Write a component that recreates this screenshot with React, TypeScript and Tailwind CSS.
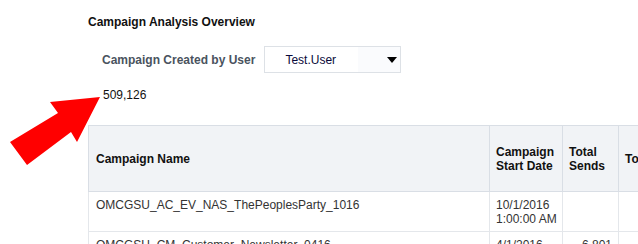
const rows = [
  { name: "OMCGSU_AC_EV_NAS_ThePeoplesParty_1016", date: ["10/1/2016", "1:00:00 AM"], sends: "" },
  { name: "OMCGSU_CM_Customer_Newsletter_0416", date: ["4/1/2016", "1:00:00 AM"], sends: "6,801" },
];

export default function App() {
  return (
    <div className="relative w-[638px] h-[244px] overflow-hidden bg-white font-['Liberation_Sans',Arial,sans-serif] text-[12px] leading-[14px]">
      {/* title */}
      <div className="ml-[88px] pt-[15px] font-bold text-[#111]">Campaign Analysis Overview</div>

      {/* filter */}
      <div className="flex items-center gap-[9px] ml-[102px] mt-[17px]">
        <span className="font-bold text-[#4a535e]">Campaign Created by User</span>
        <div className="flex h-[27px] w-[137px] border border-[#dde1e6]">
          <div className="flex flex-1 items-center pl-[20px] text-[#0a0a3a] bg-white">Test.User</div>
          <div className="flex w-[42px] items-center justify-end pr-[2px] bg-[#fafbfd]">
            <svg width="10" height="6" viewBox="0 0 10 6" className="mr-[1px]">
              <polygon points="0,0 10,0 5,6" fill="#000" />
            </svg>
          </div>
        </div>
      </div>

      {/* total */}
      <div className="ml-[103px] mt-[15px] text-[#111]">509,126</div>

      {/* table */}
      <table className="ml-[88px] mt-[23px] table-fixed border-collapse w-[640px]">
        <colgroup>
          <col className="w-[401px]" />
          <col className="w-[73px]" />
          <col className="w-[56px]" />
          <col className="w-[110px]" />
        </colgroup>
        <thead>
          <tr className="bg-[#f1f3f6]">
            {["Campaign Name", "Campaign Start Date", "Total Sends", "Total Deliveries"].map((h) => (
              <th
                key={h}
                className="h-[66px] border border-[#d9dee5] pl-[6px] pr-[2px] first:pl-[7px] text-left align-middle font-bold text-[#111]"
              >
                {h}
              </th>
            ))}
          </tr>
        </thead>
        <tbody>
          {rows.map((r) => (
            <tr key={r.name}>
              <td className="h-[40px] border border-[#e4e7eb] pl-[7px] pt-[6px] align-top text-[#333] whitespace-nowrap">
                {r.name}
              </td>
              <td className="border border-[#e4e7eb] pl-[6px] pr-[2px] pt-[6px] align-top text-[#333] whitespace-nowrap">
                {r.date[0]}
                <br />
                {r.date[1]}
              </td>
              <td className="border border-[#e4e7eb] px-[6px] pt-[6px] align-top text-right text-[#333]">{r.sends}</td>
              <td className="border border-[#e4e7eb] px-[6px] pt-[6px] align-top text-[#333]"></td>
            </tr>
          ))}
        </tbody>
      </table>

      {/* red arrow */}
      <svg className="absolute left-0 top-0" width="110" height="170" viewBox="0 0 110 170">
        <polygon points="100,97 50,102 58,113 10,142 27,165 71,132 77,142" fill="#ff0000" />
      </svg>
    </div>
  );
}
